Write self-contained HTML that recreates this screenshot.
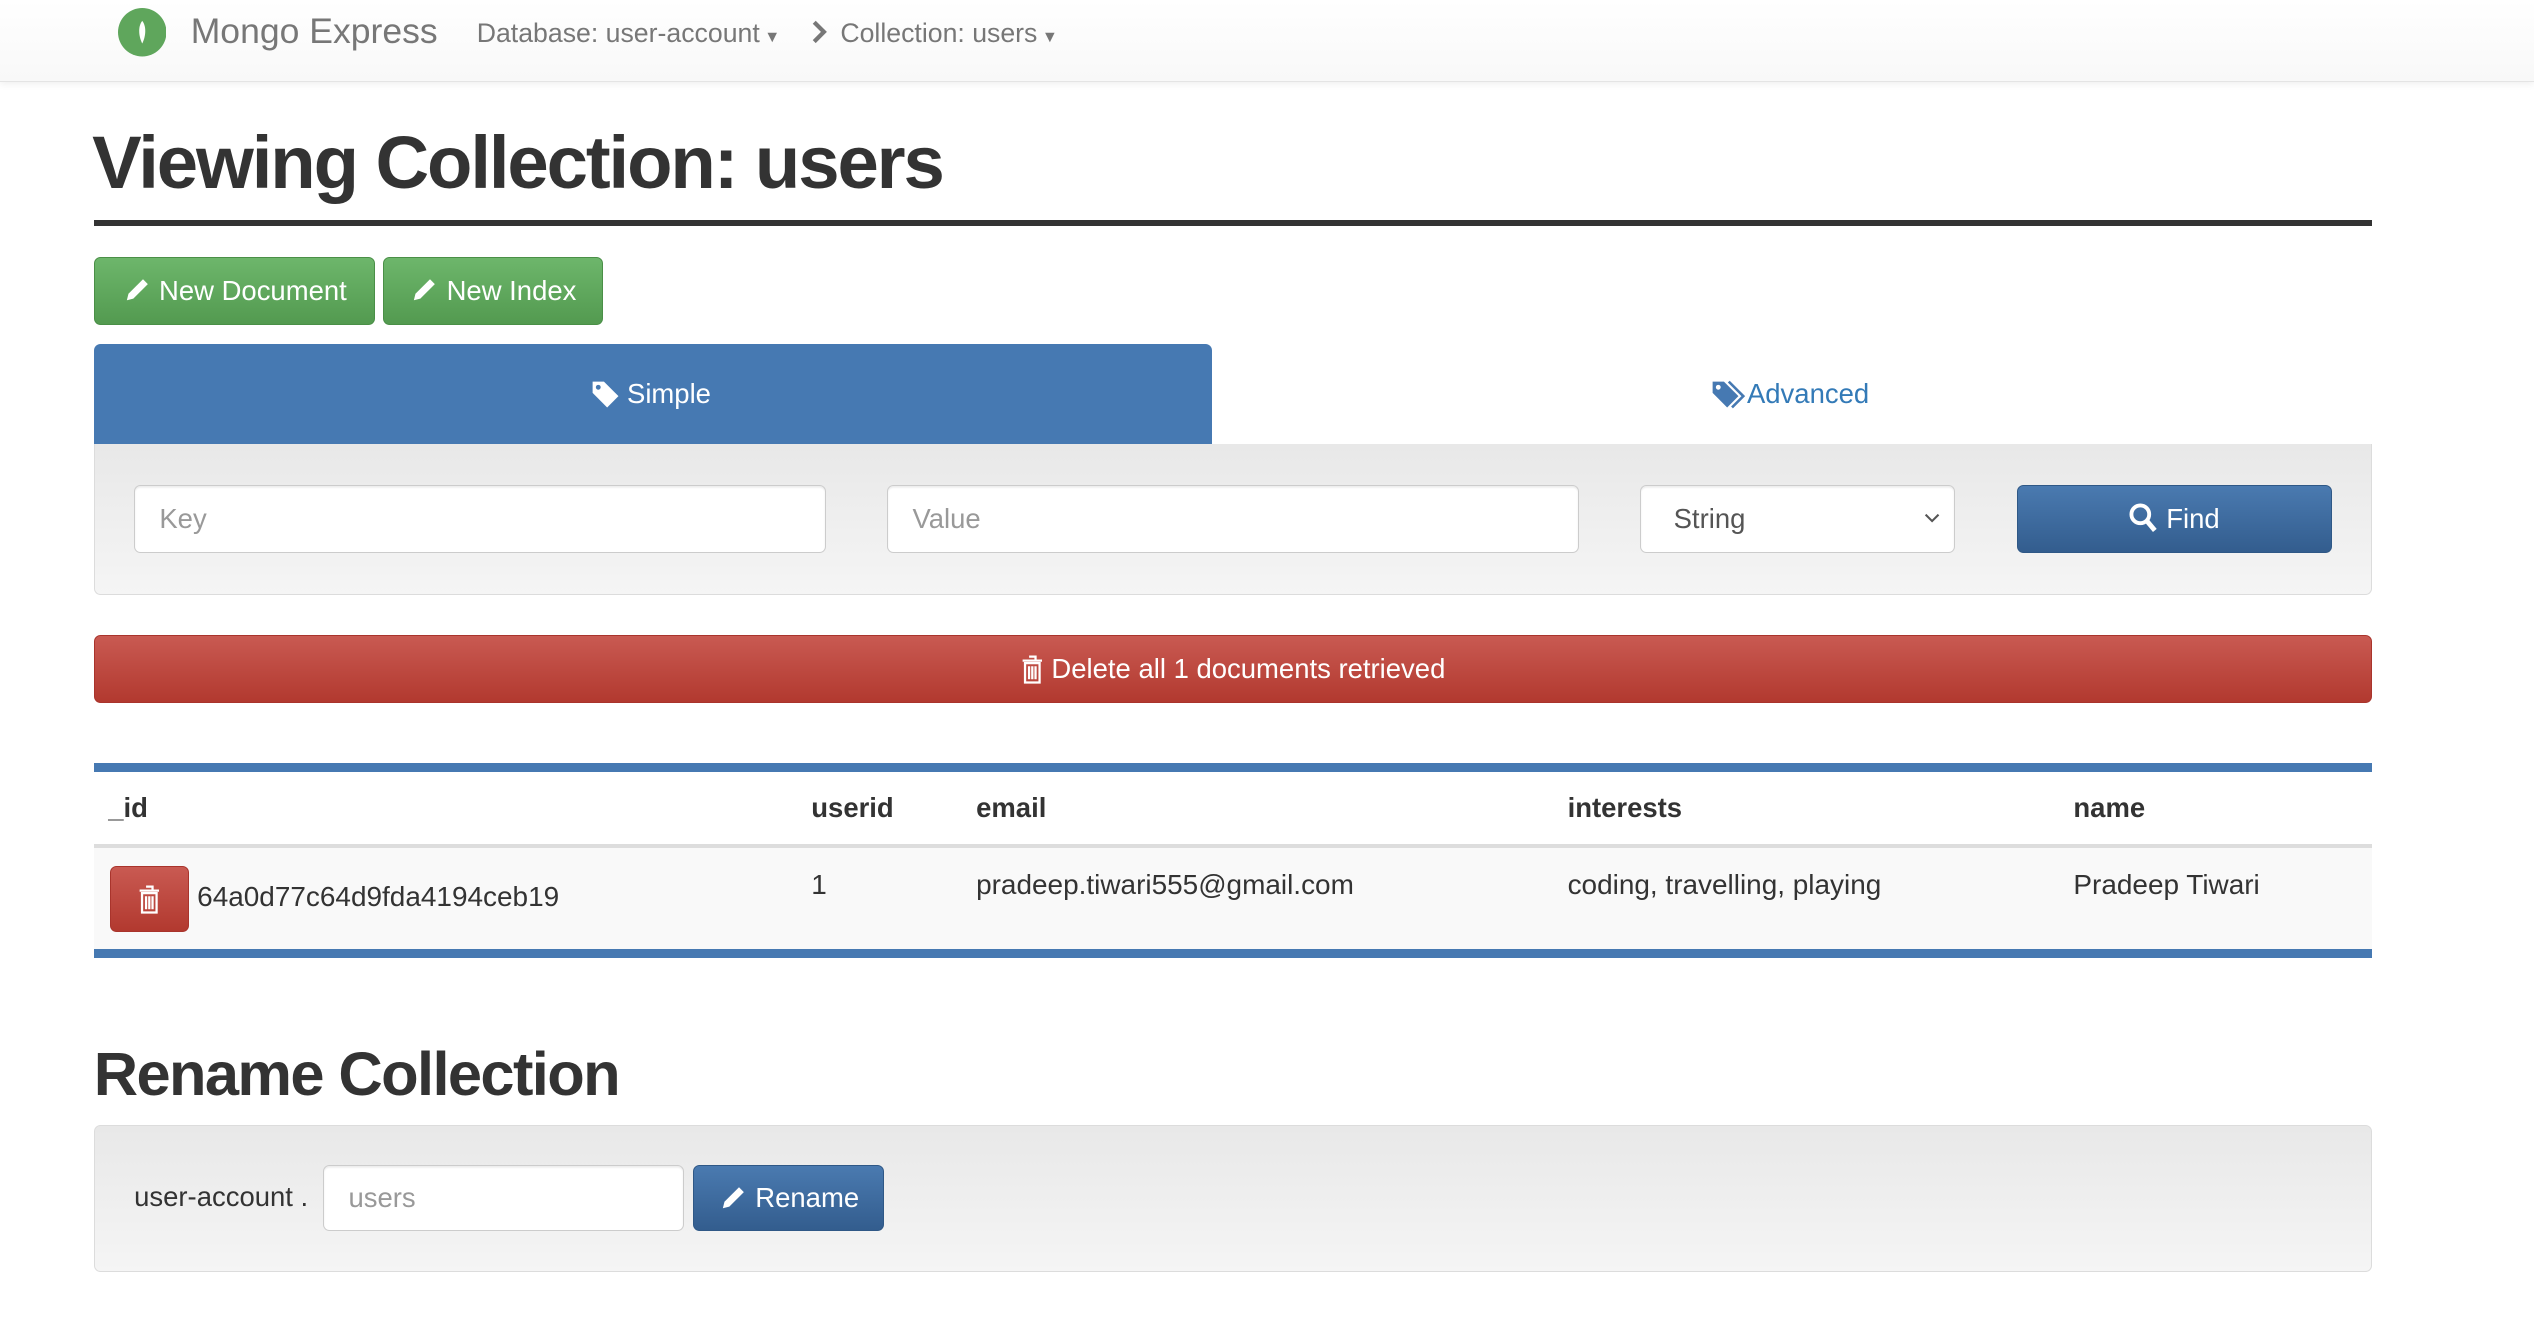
<!DOCTYPE html>
<html><head><meta charset="utf-8"><style>
html{zoom:1.61607}
body{margin:0;width:1568px;height:825px;overflow:hidden;background:#fff;font-family:"Liberation Sans",Arial,sans-serif;color:#333;position:relative}
.a{position:absolute}
.nav{left:0;top:0;width:1568px;height:50px;background:linear-gradient(#fff,#f8f8f8);border-bottom:1px solid #e4e4e4;box-shadow:0 2px 4px rgba(0,0,0,.06)}
.btn{position:absolute;box-sizing:border-box;border-radius:4px;color:#fff;font-size:17px;display:flex;align-items:center;justify-content:center;gap:5px}
.green{background:linear-gradient(#6db66b,#539a50);border:1px solid #4a8f47}
.blue{background:linear-gradient(#4a7ab0,#335d8e);border:1px solid #2f5886}
.red{background:linear-gradient(#c95a52,#b2392f);border:1px solid #a9342c}
.well{background:linear-gradient(#e8e8e8,#f5f5f5);border:1px solid #dcdcdc;border-radius:4px;box-sizing:border-box}
.inp{position:absolute;box-sizing:border-box;background:#fff;border:1px solid #ccc;border-radius:4px;font-size:17px;color:#999;display:flex;align-items:center;padding-left:15px;box-shadow:inset 0 1px 1px rgba(0,0,0,.08)}
.th{position:absolute;top:490px;font-size:17px;font-weight:bold;color:#333}
.td{position:absolute;top:538px;font-size:17.3px;color:#333}
</style></head><body>
<div class="a nav"></div>
<svg class="a" style="left:73px;top:5px" width="30" height="30" viewBox="0 0 30 30"><circle cx="15" cy="15" r="15" fill="#5fa65c"/><path d="M15 8 C12.5 11 12.5 17 15 22 C17.5 17 17.5 11 15 8Z" fill="#fff"/></svg>
<div class="a" style="left:118px;top:7px;font-size:22px;color:#777">Mongo Express</div>
<div class="a" style="left:295px;top:11px;font-size:16.5px;color:#777">Database: user-account<span style="font-size:10px"> ▼</span></div>
<svg class="a" style="left:502px;top:12px" width="10" height="16" viewBox="0 0 10 16"><path d="M2 2 L8 8 L2 14" stroke="#777" stroke-width="2.6" fill="none"/></svg>
<div class="a" style="left:520px;top:11px;font-size:16.5px;color:#777">Collection: users<span style="font-size:10px"> ▼</span></div>

<div class="a" style="left:57px;top:74px;font-size:46px;font-weight:bold;color:#333;letter-spacing:-1.3px">Viewing Collection: users</div>
<div class="a" style="left:58px;top:136px;width:1410px;height:4px;background:#333"></div>

<div class="btn green" style="left:58px;top:159px;width:174px;height:42px"><svg width="18" height="18" viewBox="0 0 18 18"><path d="M13 2l3 3-9 9-4 1 1-4z" fill="#fff"/></svg>New Document</div>
<div class="btn green" style="left:237px;top:159px;width:136px;height:42px"><svg width="18" height="18" viewBox="0 0 18 18"><path d="M13 2l3 3-9 9-4 1 1-4z" fill="#fff"/></svg>New Index</div>

<div class="a" style="left:58px;top:213px;width:692px;height:62px;background:#4679b2;border-radius:4px 4px 0 0"></div>
<div class="a" style="left:366px;top:234px;font-size:17px;color:#fff;display:flex;gap:4px;align-items:center"><svg width="18" height="18" viewBox="0 0 18 18"><path d="M1 1h7l9 9-7 7-9-9z" fill="#fff"/><circle cx="4.5" cy="4.5" r="1.5" fill="#4679b2"/></svg>Simple</div>
<div class="a" style="left:1059px;top:234px;font-size:17px;color:#337ab7;display:flex;align-items:center"><svg width="22" height="18" viewBox="0 0 22 18"><path d="M1 1h7l9 9-7 7-9-9z" fill="#4679b2"/><path d="M11 1l9 9-7 7" stroke="#4679b2" stroke-width="1.6" fill="none"/><circle cx="4.5" cy="4.5" r="1.5" fill="#fff"/></svg>Advanced</div>

<div class="a well" style="left:58px;top:275px;width:1410px;height:93px;border-top:none;border-radius:0 0 4px 4px"></div>
<div class="inp" style="left:83px;top:300px;width:428px;height:42px">Key</div>
<div class="inp" style="left:549px;top:300px;width:428px;height:42px">Value</div>
<div class="inp" style="left:1015px;top:300px;width:195px;height:42px;color:#555;padding-left:20px">String<svg style="position:absolute;right:9px;top:17px" width="10" height="7" viewBox="0 0 10 7"><path d="M1 1l4 4 4-4" stroke="#555" stroke-width="1.3" fill="none"/></svg></div>
<div class="btn blue" style="left:1248px;top:300px;width:195px;height:42px"><svg width="18" height="19" viewBox="0 0 18 19"><circle cx="7" cy="7" r="5.5" stroke="#fff" stroke-width="2.4" fill="none"/><path d="M11 11l5 6" stroke="#fff" stroke-width="3"/></svg>Find</div>

<div class="btn red" style="left:58px;top:393px;width:1410px;height:42px"><svg width="14" height="18" viewBox="0 0 14 18"><path d="M5 1h4v2M1 3.5h12M2.5 5h9v12h-9zM5 7v8M7 7v8M9 7v8" stroke="#fff" stroke-width="1.4" fill="none"/></svg>Delete all 1 documents retrieved</div>

<div class="a" style="left:58px;top:472px;width:1410px;height:6px;background:#4679b2"></div>
<div class="th" style="left:67px">_id</div>
<div class="th" style="left:502px">userid</div>
<div class="th" style="left:604px">email</div>
<div class="th" style="left:970px">interests</div>
<div class="th" style="left:1283px">name</div>
<div class="a" style="left:58px;top:522px;width:1410px;height:3px;background:#ddd"></div>
<div class="a" style="left:58px;top:525px;width:1410px;height:62px;background:#f9f9f9"></div>
<div class="btn red" style="left:68px;top:536px;width:49px;height:41px"><svg width="14" height="18" viewBox="0 0 14 18"><path d="M5 1h4v2M1 3.5h12M2.5 5h9v12h-9zM5 7v8M7 7v8M9 7v8" stroke="#fff" stroke-width="1.4" fill="none"/></svg></div>
<div class="td" style="left:122px;top:545px">64a0d77c64d9fda4194ceb19</div>
<div class="td" style="left:502px">1</div>
<div class="td" style="left:604px">pradeep.tiwari555@gmail.com</div>
<div class="td" style="left:970px">coding, travelling, playing</div>
<div class="td" style="left:1283px">Pradeep Tiwari</div>
<div class="a" style="left:58px;top:587px;width:1410px;height:6px;background:#4679b2"></div>

<div class="a" style="left:58px;top:643px;font-size:38px;font-weight:bold;color:#333;letter-spacing:-1px">Rename Collection</div>
<div class="a well" style="left:58px;top:696px;width:1410px;height:91px"></div>
<div class="a" style="left:83px;top:731px;font-size:17px;color:#333">user-account .</div>
<div class="inp" style="left:200px;top:721px;width:223px;height:41px">users</div>
<div class="btn blue" style="left:429px;top:721px;width:118px;height:41px"><svg width="18" height="18" viewBox="0 0 18 18"><path d="M13 2l3 3-9 9-4 1 1-4z" fill="#fff"/></svg>Rename</div>
</body></html>
